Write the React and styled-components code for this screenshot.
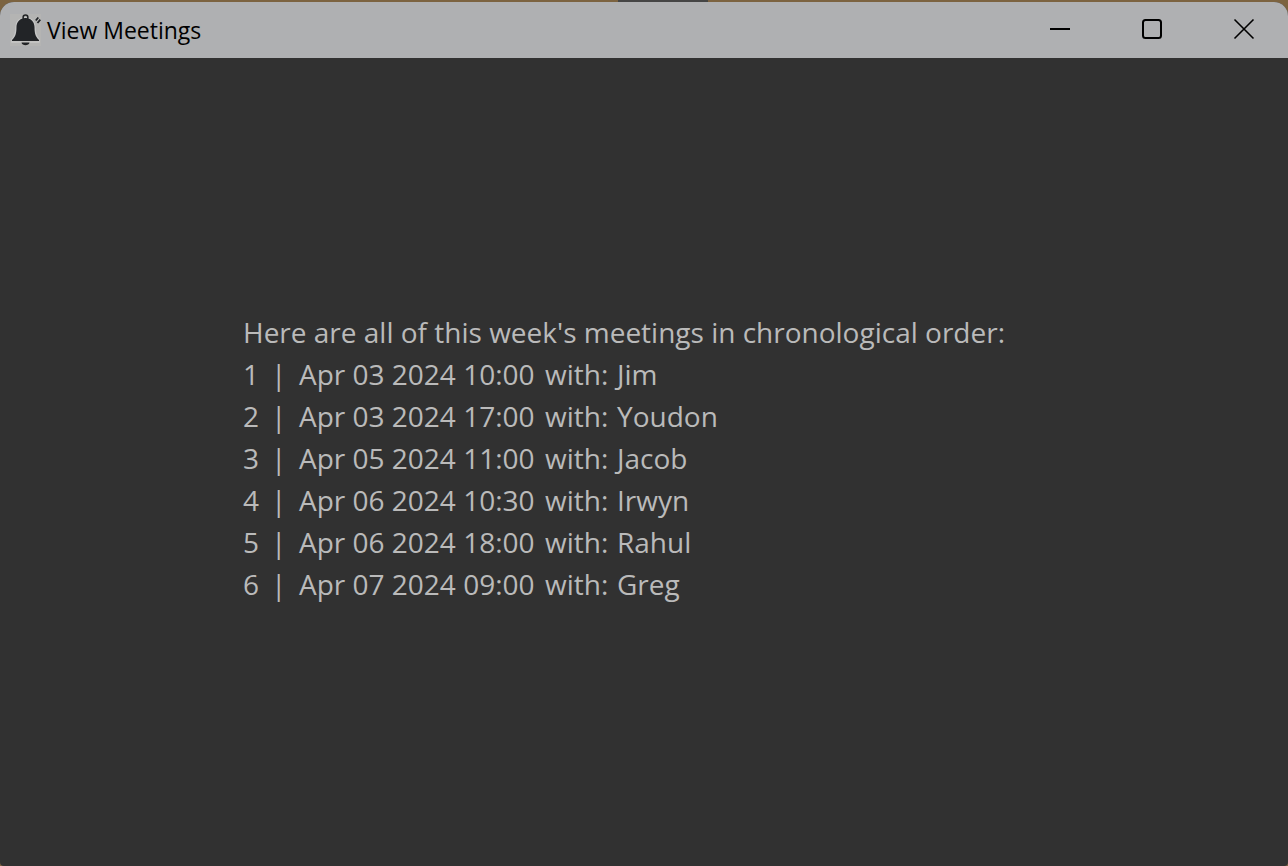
import React from "react";
import styled, { createGlobalStyle } from "styled-components";

const GlobalStyle = createGlobalStyle`
  * { box-sizing: border-box; }
  body { margin: 0; background: #7c6340; font-family: "Segoe UI", "Open Sans", "Noto Sans", sans-serif; }
`;

const Desktop = styled.div`
  min-height: 100vh;
  padding-top: 2px;
  display: flex;
  flex-direction: column;
  background:
    linear-gradient(90deg, transparent 48%, #454545 48%, #454545 55%, transparent 55%) top / 100% 2px no-repeat,
    #7c6340;
`;

const Window = styled.div`
  flex: 1;
  display: flex;
  flex-direction: column;
  overflow: hidden;
  border-radius: 14px 14px 4px 4px;
  background: #313131;
`;

const TitleBar = styled.header`
  height: 56px;
  display: flex;
  align-items: center;
  padding-left: 10px;
  background: #afb0b2;
  color: #000;
`;

const AppIcon = styled.svg`
  width: 32px;
  height: 32px;
  flex: none;
`;

const Title = styled.h1`
  flex: 1;
  margin: 0 0 0 5px;
  font-size: 23px;
  line-height: 32px;
  font-weight: 400;
`;

const WindowControls = styled.div`
  display: flex;
  margin-right: -2px;
`;

const WindowButton = styled.button`
  width: 92px;
  height: 56px;
  display: grid;
  place-items: center;
  padding: 0 0 2px;
  border: 0;
  background: transparent;
  color: inherit;
`;

const Glyph = styled.svg`
  width: 22px;
  height: 22px;
  fill: none;
  stroke: currentColor;
  stroke-width: ${(p) => p.$weight}px;
`;

const Content = styled.main`
  flex: 1;
  display: flex;
  align-items: center;
  justify-content: center;
  padding: 0 40px 8px 0;
`;

const Message = styled.section`
  color: #bababa;
  font-size: 28px;
  line-height: 42px;
  font-weight: 400;
`;

const Line = styled.p`
  margin: 0;
`;

const MeetingList = styled.ol`
  margin: 0;
  padding: 0;
  list-style: none;
`;

const Meeting = styled.li`
  display: grid;
  grid-template-columns: 28px 28px 246px 72px auto;
  white-space: nowrap;
`;

const meetings = [
  ["Apr 03 2024 10:00", "Jim"],
  ["Apr 03 2024 17:00", "Youdon"],
  ["Apr 05 2024 11:00", "Jacob"],
  ["Apr 06 2024 10:30", "Irwyn"],
  ["Apr 06 2024 18:00", "Rahul"],
  ["Apr 07 2024 09:00", "Greg"],
];

export default function App() {
  return (
    <Desktop>
      <GlobalStyle />
      <Window>
        <TitleBar>
          <AppIcon viewBox="0 0 32 32" aria-hidden="true">
            <rect width="31" height="32" fill="#b4b4b3" />
            <path d="M15.500 3.800C21 3.800 25 7.500 25 13C25 18.500 25.500 22 29 25.500V28H2V25.500C5.500 22 6 18.500 6 13C6 7.500 10 3.800 15.500 3.800Z" fill="none" stroke="#c6c6c6" strokeWidth="1.500" />
            <path d="M15.500 4C21 4 24.500 8 24.500 13C24.500 19 25.200 22.500 29 26V27H2V26C5.800 22.500 6.500 19 6.500 13C6.500 8 10 4 15.500 4Z" fill="#222427" />
            <circle cx="15.500" cy="3.500" r="2.400" fill="none" stroke="#222427" strokeWidth="1.500" />
            <path d="M11.500 28.500H19.500C19 32 12 32 11.500 28.500Z" fill="#222427" />
            <path d="M25.800 6.500L28.300 3.500M27.500 9L30.300 5.700" stroke="#222427" strokeWidth="1.800" />
          </AppIcon>
          <Title>View Meetings</Title>
          <WindowControls>
            <WindowButton type="button" aria-label="Minimize">
              <Glyph viewBox="0 0 22 22" $weight={2}><path d="M1 11H21" /></Glyph>
            </WindowButton>
            <WindowButton type="button" aria-label="Maximize">
              <Glyph viewBox="0 0 22 22" $weight={2}><rect x="2" y="2" width="18" height="18" rx="2.500" /></Glyph>
            </WindowButton>
            <WindowButton type="button" aria-label="Close">
              <Glyph viewBox="0 0 22 22" $weight={1.6}><path d="M1.500 1.500L20.500 20.500M20.500 1.500L1.500 20.500" /></Glyph>
            </WindowButton>
          </WindowControls>
        </TitleBar>
        <Content>
          <Message>
            <Line>Here are all of this week's meetings in chronological order:</Line>
            <MeetingList>
              {meetings.map(([time, name], i) => (
                <Meeting key={time}>
                  <span>{i + 1}</span>
                  <span>|</span>
                  <time>{time}</time>
                  <span>with:</span>
                  <span>{name}</span>
                </Meeting>
              ))}
            </MeetingList>
          </Message>
        </Content>
      </Window>
    </Desktop>
  );
}
